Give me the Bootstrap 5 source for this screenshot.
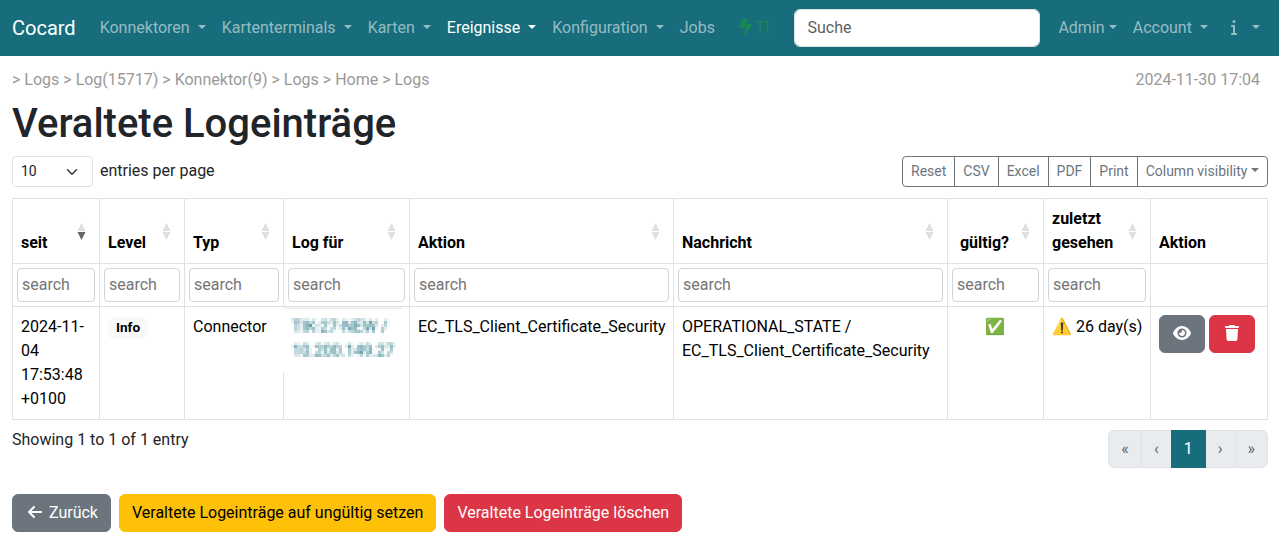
<!DOCTYPE html>
<html lang="de">
<head>
<meta charset="utf-8">
<meta name="viewport" content="width=device-width, initial-scale=1">
<title>Cocard – Veraltete Logeinträge</title>
<link href="https://cdn.jsdelivr.net/npm/bootstrap@5.3.0/dist/css/bootstrap.min.css" rel="stylesheet">
<style>
  body { font-family: Roboto, "Noto Sans", sans-serif; overflow: hidden; }
  .container-fluid { padding-right: 11px !important; }
  .top-bar { background: #176d7c; height: 56px; --bs-navbar-color: rgba(255,255,255,.55); }
  .top-bar .nav-link { white-space: nowrap; }
  .search-box { width: 246px; margin-left: 17px; flex: none; }
  .ti-state { color: #198754 !important; margin-left: 9px; }
  .crumbs { color: #999; padding-top: 12px; }
  .page-title { font-size: 40px; line-height: 48px; margin: 8px 0 8px; }
  .ico { height: 1em; width: 1.25em; vertical-align: -.125em; fill: currentColor; }
  .ico-bolt { width: .75em; }
  .page-len { width: 81px; }
  .len-label { margin: 3px 0 0 7px; }
  .log-table { table-layout: fixed; width: 1256px; margin: 11px 0 10px; color: #000; border-color: #dee2e6; }
  .log-table th, .log-table td { vertical-align: top; color: #000; }
  .log-table thead tr:first-child th { vertical-align: bottom; position: relative; }
  .log-table .filters td { padding: 4px; }
  .filters input { display: block; width: 100%; height: 34px; padding: 0 4px 2px; border: 1px solid #ced4da; border-radius: 4px; }
  .filters input::placeholder { color: #757575; }
  .log-table .valid-head { text-align: center; padding-right: 30px; }
  .log-table .valid-cell { text-align: center; padding-right: 10px; }
  .level-badge { font-size: 13.6px; padding: 4px 8px; }
  .sorter { position: absolute; right: 13px; top: 50%; margin-top: -8px; width: 9px; height: 17px; }
  .sorter path { opacity: .125; }
  .sorter .on { opacity: .6; }
  .host-cell { position: relative; }
  .host-mask { position: absolute; left: -1px; top: 0; width: 119px; height: 65px; padding: 6px 0 0 8px; background: #fff; border-top: 2px solid #f0f1f3; line-height: 24px; white-space: nowrap; color: #176d7c; }
  .host-mask span { display: block; padding-left: 1px; filter: url(#mosaic); }
  .pager { --bs-pagination-disabled-color: #5b6066; --bs-pagination-disabled-bg: #e9ecef; --bs-pagination-active-bg: #176d7c; --bs-pagination-active-border-color: #176d7c; }
  .result-info { margin-top: -2px; }
  .actions { margin-top: 26px; }
</style>
</head>
<body>
<nav class="navbar navbar-expand navbar-dark top-bar py-0">
  <div class="container-fluid">
    <a class="navbar-brand" href="#">Cocard</a>
    <ul class="navbar-nav">
      <li class="nav-item"><a class="nav-link dropdown-toggle" href="#">Konnektoren&#32;</a></li>
      <li class="nav-item"><a class="nav-link dropdown-toggle" href="#">Kartenterminals&#32;</a></li>
      <li class="nav-item"><a class="nav-link dropdown-toggle" href="#">Karten&#32;</a></li>
      <li class="nav-item"><a class="nav-link dropdown-toggle active" href="#">Ereignisse&#32;</a></li>
      <li class="nav-item"><a class="nav-link dropdown-toggle" href="#">Konfiguration&#32;</a></li>
      <li class="nav-item"><a class="nav-link" href="#">Jobs</a></li>
      <li class="nav-item"><a class="nav-link ti-state" href="#"><svg class="ico ico-bolt" viewBox="0 0 384 512"><path d="M0 256L28.500 28c2-16 15.600-28 31.800-28H228.900c15 0 27.100 12.100 27.100 27.100c0 3.200-.6 6.500-1.700 9.500L208 160H347.300c20.200 0 36.700 16.400 36.700 36.700c0 7.400-2.200 14.600-6.400 20.700l-192.200 281c-5.900 8.600-15.600 13.700-25.900 13.700h-2.900c-15.700 0-28.500-12.800-28.500-28.500c0-2.300 .3-4.600 .9-6.900L176 288H32c-17.700 0-32-14.300-32-32z"/></svg> TI</a></li>
    </ul>
    <form class="search-box"><input class="form-control" type="search" placeholder="Suche"></form>
    <ul class="navbar-nav ms-auto">
      <li class="nav-item"><a class="nav-link dropdown-toggle" href="#">Admin</a></li>
      <li class="nav-item"><a class="nav-link dropdown-toggle" href="#">Account&#32;</a></li>
      <li class="nav-item"><a class="nav-link dropdown-toggle" href="#"><svg class="ico" viewBox="0 0 192 512"><path d="M48 80a48 48 0 1 1 96 0A48 48 0 1 1 48 80zM0 224c0-17.700 14.300-32 32-32H96c17.700 0 32 14.300 32 32V448h32c17.700 0 32 14.300 32 32s-14.300 32-32 32H32c-17.700 0-32-14.300-32-32s14.300-32 32-32H64V256H32c-17.700 0-32-14.300-32-32z"/></svg>&#32;</a></li>
    </ul>
  </div>
</nav>

<main class="container-fluid">
  <div class="crumbs d-flex justify-content-between">
    <span>&gt; Logs &gt; Log(15717) &gt; Konnektor(9) &gt; Logs &gt; Home &gt; Logs</span>
    <span class="pe-2">2024-11-30 17:04</span>
  </div>
  <h1 class="page-title">Veraltete Logeinträge</h1>

  <div class="d-flex justify-content-between align-items-start">
    <label class="d-flex"><select class="form-select form-select-sm page-len"><option>10</option></select><span class="len-label">entries per page</span></label>
    <div class="btn-group btn-group-sm">
      <button class="btn btn-outline-secondary">Reset</button>
      <button class="btn btn-outline-secondary">CSV</button>
      <button class="btn btn-outline-secondary">Excel</button>
      <button class="btn btn-outline-secondary">PDF</button>
      <button class="btn btn-outline-secondary">Print</button>
      <button class="btn btn-outline-secondary dropdown-toggle">Column visibility</button>
    </div>
  </div>

  <table class="table table-bordered log-table">
    <colgroup><col style="width:87px"><col style="width:85px"><col style="width:99px"><col style="width:126px"><col style="width:264px"><col style="width:274px"><col style="width:96px"><col style="width:107px"><col style="width:117px"></colgroup>
    <thead>
      <tr>
        <th>seit<svg class="sorter"><path d="M4.500 0L8.500 8H.5z"/><path class="on" d="M.5 9h8L4.500 17z"/></svg></th>
        <th>Level<svg class="sorter"><path d="M4.500 0L8.500 8H.5z"/><path d="M.5 9h8L4.500 17z"/></svg></th>
        <th>Typ<svg class="sorter"><path d="M4.500 0L8.500 8H.5z"/><path d="M.5 9h8L4.500 17z"/></svg></th>
        <th>Log für<svg class="sorter"><path d="M4.500 0L8.500 8H.5z"/><path d="M.5 9h8L4.500 17z"/></svg></th>
        <th>Aktion<svg class="sorter"><path d="M4.500 0L8.500 8H.5z"/><path d="M.5 9h8L4.500 17z"/></svg></th>
        <th>Nachricht<svg class="sorter"><path d="M4.500 0L8.500 8H.5z"/><path d="M.5 9h8L4.500 17z"/></svg></th>
        <th class="valid-head">gültig?<svg class="sorter"><path d="M4.500 0L8.500 8H.5z"/><path d="M.5 9h8L4.500 17z"/></svg></th>
        <th>zuletzt gesehen<svg class="sorter"><path d="M4.500 0L8.500 8H.5z"/><path d="M.5 9h8L4.500 17z"/></svg></th>
        <th>Aktion</th>
      </tr>
      <tr class="filters">
        <td><input placeholder="search"></td><td><input placeholder="search"></td><td><input placeholder="search"></td>
        <td><input placeholder="search"></td><td><input placeholder="search"></td><td><input placeholder="search"></td>
        <td><input placeholder="search"></td><td><input placeholder="search"></td><td></td>
      </tr>
    </thead>
    <tbody>
      <tr>
        <td>2024-11-04 17:53:48 +0100</td>
        <td><span class="badge text-bg-light level-badge">Info</span></td>
        <td>Connector</td>
        <td class="host-cell"><div class="host-mask"><span>TIK-27-NEW /<br>10.200.149.27</span></div></td>
        <td>EC_TLS_Client_Certificate_Security</td>
        <td>OPERATIONAL_STATE / EC_TLS_Client_Certificate_Security</td>
        <td class="valid-cell">✅</td>
        <td class="text-nowrap">⚠️ 26 day(s)</td>
        <td class="text-nowrap"><a class="btn btn-secondary" href="#"><svg class="ico" viewBox="0 0 576 512"><path d="M288 32c-80.800 0-145.500 36.800-192.600 80.600C48.600 156 17.300 208 2.500 243.700c-3.300 7.900-3.300 16.700 0 24.600C17.300 304 48.600 356 95.400 399.400C142.500 443.200 207.200 480 288 480s145.500-36.800 192.600-80.600c46.800-43.500 78.100-95.400 93-131.100c3.300-7.900 3.300-16.700 0-24.600c-14.900-35.700-46.200-87.700-93-131.100C433.500 68.800 368.800 32 288 32zM144 256a144 144 0 1 1 288 0 144 144 0 1 1 -288 0zm144-64c0 35.300-28.700 64-64 64c-7.100 0-13.900-1.200-20.300-3.300c-5.500-1.800-11.900 1.600-11.700 7.400c.3 6.900 1.300 13.800 3.200 20.700c13.700 51.200 66.400 81.600 117.600 67.900s81.600-66.400 67.900-117.600c-11.100-41.500-47.800-69.400-88.600-71.100c-5.800-.2-9.200 6.100-7.400 11.700c2.100 6.400 3.300 13.200 3.300 20.300z"/></svg></a>
          <a class="btn btn-danger" href="#"><svg class="ico" viewBox="0 0 448 512"><path d="M135.200 17.700L128 32H32C14.300 32 0 46.300 0 64S14.300 96 32 96H416c17.700 0 32-14.300 32-32s-14.300-32-32-32H320l-7.200-14.300C307.400 6.800 296.300 0 284.200 0H163.800c-12.100 0-23.200 6.800-28.600 17.700zM416 128H32L53.200 467c1.600 25.300 22.600 45 47.900 45H346.900c25.300 0 46.300-19.700 47.900-45L416 128z"/></svg></a></td>
      </tr>
    </tbody>
  </table>

  <div class="d-flex justify-content-between align-items-start">
    <div class="result-info">Showing 1 to 1 of 1 entry</div>
    <ul class="pagination pager mb-0">
      <li class="page-item disabled"><a class="page-link">«</a></li>
      <li class="page-item disabled"><a class="page-link">‹</a></li>
      <li class="page-item active"><a class="page-link">1</a></li>
      <li class="page-item disabled"><a class="page-link">›</a></li>
      <li class="page-item disabled"><a class="page-link">»</a></li>
    </ul>
  </div>

  <div class="actions d-flex gap-2">
    <a class="btn btn-secondary" href="#"><svg class="ico" viewBox="0 0 448 512"><path d="M9.400 233.400c-12.500 12.500-12.500 32.800 0 45.300l160 160c12.500 12.500 32.800 12.500 45.300 0s12.500-32.800 0-45.300L109.200 288 416 288c17.700 0 32-14.300 32-32s-14.300-32-32-32l-306.700 0L214.600 118.600c12.500-12.500 12.500-32.800 0-45.300s-32.800-12.500-45.300 0l-160 160z"/></svg> Zurück</a>
    <button class="btn btn-warning">Veraltete Logeinträge auf ungültig setzen</button>
    <button class="btn btn-danger">Veraltete Logeinträge löschen</button>
  </div>
</main>

<!-- Mosaic that hides the host name: samples one pixel of every 3x3 block -->
<svg width="0" height="0" class="position-absolute">
  <filter id="mosaic" x="0" y="0" width="1" height="1" color-interpolation-filters="sRGB">
    <feGaussianBlur in="SourceGraphic" stdDeviation="0.9" result="soft"/>
    <feFlood x="1" y="1" width="1" height="1" flood-color="#000"/>
    <feComposite in2="SourceGraphic" operator="over" x="0" y="0" width="3" height="3" result="dot0"/>
    <feFlood x="1" y="1" width="1" height="1" flood-color="#000" result="dot"/>
    <feOffset in="dot" dx="0" dy="0" x="0" y="0" width="3" height="3"/>
    <feTile result="grid"/>
    <feComposite in="soft" in2="grid" operator="in"/>
    <feMorphology operator="dilate" radius="1"/>
  </filter>
</svg>
<script src="https://cdn.jsdelivr.net/npm/bootstrap@5.3.0/dist/js/bootstrap.bundle.min.js"></script>
</body>
</html>
